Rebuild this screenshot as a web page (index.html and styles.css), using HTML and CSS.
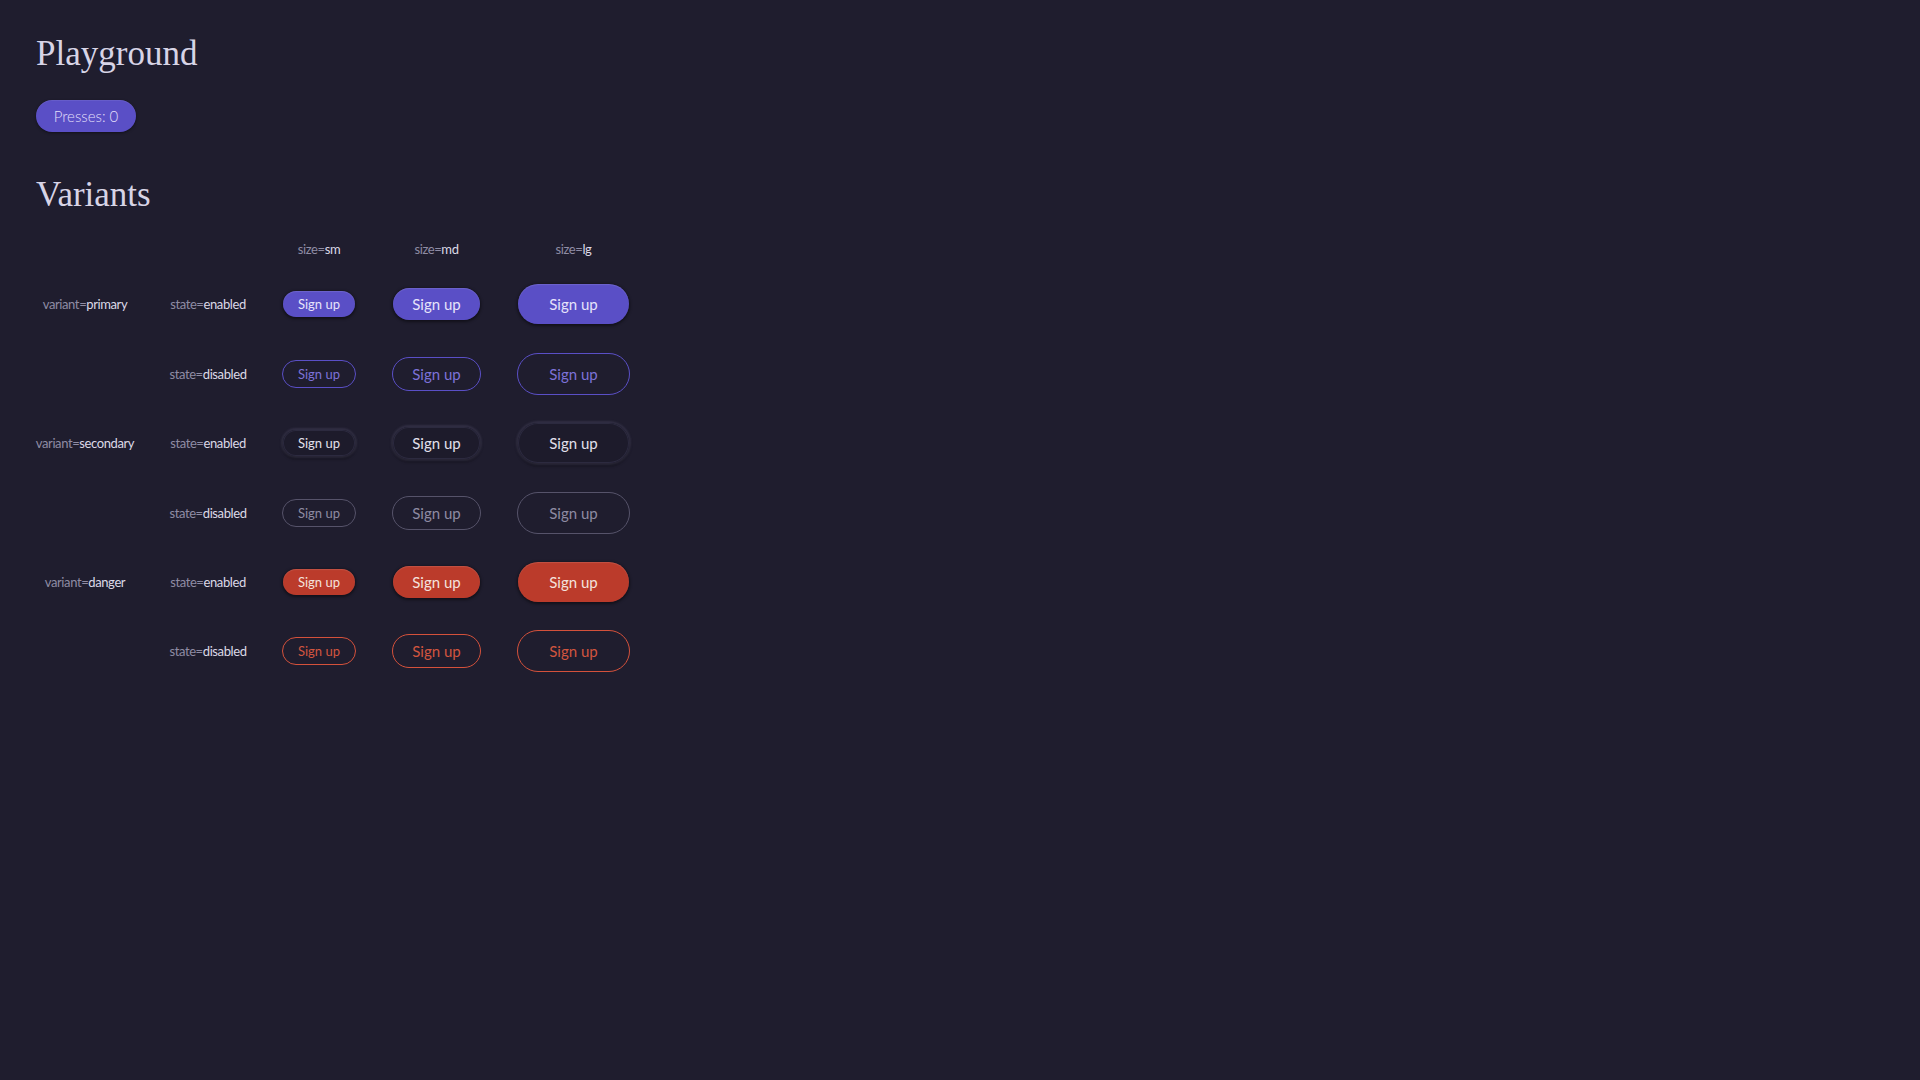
FILE: index.html
```html
<!DOCTYPE html>
<html lang="en">
<head>
<meta charset="utf-8">
<title>Playground</title>
<link rel="stylesheet" href="styles.css">
</head>
<body>
<main class="page">
  <h1 class="title">Playground</h1>
  <div class="presses-row">
    <button class="presses">Presses: 0</button>
  </div>
  <h2 class="title title-sub">Variants</h2>
  <div class="matrix">
    <div class="cell head"></div>
    <div class="cell head"></div>
    <div class="cell head label"><span class="k">size=</span><span class="v">sm</span></div>
    <div class="cell head label"><span class="k">size=</span><span class="v">md</span></div>
    <div class="cell head label"><span class="k">size=</span><span class="v">lg</span></div>

    <div class="cell label"><span class="k">variant=</span><span class="v">primary</span></div>
    <div class="cell label"><span class="k">state=</span><span class="v">enabled</span></div>
    <div class="cell"><button class="btn sm primary">Sign up</button></div>
    <div class="cell"><button class="btn md primary">Sign up</button></div>
    <div class="cell"><button class="btn lg primary">Sign up</button></div>

    <div class="cell"></div>
    <div class="cell label"><span class="k">state=</span><span class="v">disabled</span></div>
    <div class="cell"><button class="btn sm primary-off" disabled>Sign up</button></div>
    <div class="cell"><button class="btn md primary-off" disabled>Sign up</button></div>
    <div class="cell"><button class="btn lg primary-off" disabled>Sign up</button></div>

    <div class="cell label"><span class="k">variant=</span><span class="v">secondary</span></div>
    <div class="cell label"><span class="k">state=</span><span class="v">enabled</span></div>
    <div class="cell"><button class="btn sm secondary">Sign up</button></div>
    <div class="cell"><button class="btn md secondary">Sign up</button></div>
    <div class="cell"><button class="btn lg secondary">Sign up</button></div>

    <div class="cell"></div>
    <div class="cell label"><span class="k">state=</span><span class="v">disabled</span></div>
    <div class="cell"><button class="btn sm secondary-off" disabled>Sign up</button></div>
    <div class="cell"><button class="btn md secondary-off" disabled>Sign up</button></div>
    <div class="cell"><button class="btn lg secondary-off" disabled>Sign up</button></div>

    <div class="cell label"><span class="k">variant=</span><span class="v">danger</span></div>
    <div class="cell label"><span class="k">state=</span><span class="v">enabled</span></div>
    <div class="cell"><button class="btn sm danger">Sign up</button></div>
    <div class="cell"><button class="btn md danger">Sign up</button></div>
    <div class="cell"><button class="btn lg danger">Sign up</button></div>

    <div class="cell"></div>
    <div class="cell label"><span class="k">state=</span><span class="v">disabled</span></div>
    <div class="cell"><button class="btn sm danger-off" disabled>Sign up</button></div>
    <div class="cell"><button class="btn md danger-off" disabled>Sign up</button></div>
    <div class="cell"><button class="btn lg danger-off" disabled>Sign up</button></div>
  </div>
</main>
</body>
</html>
```
FILE: styles.css
```css
html, body {
  margin: 0;
  padding: 0;
  background: #1f1d2e;
  min-height: 100%;
}
body {
  font-family: Lato, "Open Sans", sans-serif;
  color: #dedbe9;
}
.page {
  padding: 34px 36px;
}
.title {
  font-family: "Liberation Serif", "DejaVu Serif", serif;
  font-weight: 400;
  font-size: 35px;
  line-height: 40px;
  color: #d7d4e6;
  margin: 0;
}
.title-sub {
  margin-top: 43px;
}
.presses-row {
  margin-top: 26px;
  display: flex;
}
.presses {
  box-sizing: border-box;
  width: 100px;
  height: 32px;
  border: none;
  border-radius: 16px;
  background: #5a4fc6;
  color: #e3dffa;
  font-family: Lato, sans-serif;
  font-size: 15px;
  font-weight: 300;
  padding: 0;
  box-shadow: inset 0 1px 0 rgba(255,255,255,0.08), 0 1px 3px rgba(0,0,0,0.45);
}
.matrix {
  margin-top: 27px;
  display: grid;
  grid-template-columns: 98px 76px 74px 89px 113px;
  grid-template-rows: 14px;
  column-gap: 36px;
  row-gap: 27.4px;
  align-items: center;
  justify-items: center;
}
.cell {
  display: flex;
  align-items: center;
  justify-content: center;
}
.label {
  font-size: 13px;
  line-height: 16px;
  white-space: nowrap;
  letter-spacing: -0.4px;
}
.head {
  height: 14px;
}
.k { color: #8f8ca4; }
.v { color: #dcd9e7; }

.btn {
  box-sizing: border-box;
  display: inline-flex;
  align-items: center;
  justify-content: center;
  padding: 0;
  font-family: Lato, sans-serif;
  border: 1px solid transparent;
  background-clip: padding-box;
  cursor: pointer;
}
.btn.sm { width: 74px; height: 28px; border-radius: 14px; font-size: 13px; }
.btn.md { width: 89px; height: 34px; border-radius: 17px; font-size: 15px; }
.btn.lg { width: 113px; height: 42px; border-radius: 21px; font-size: 15px; }

.primary {
  background-color: #5a4fc6;
  color: #e6e3fb;
  box-shadow: inset 0 1px 1px rgba(255,255,255,0.12), 0 1px 3px rgba(0,0,0,0.45);
}
.primary-off {
  background: transparent;
  border-color: #5a4fc6;
  color: #7d72d8;
}
.secondary {
  background-color: #1d1b2b;
  color: #e2e0ec;
  box-shadow: inset 0 0 0 1px #2c2a3f, 0 0 2px 1px rgba(120,116,150,0.22), 0 2px 3px rgba(0,0,0,0.4);
}
.secondary-off {
  background: transparent;
  border-color: #56536a;
  color: #8e8ba2;
}
.danger {
  background-color: #bb3b2b;
  color: #f4e2dd;
  box-shadow: inset 0 1px 1px rgba(255,255,255,0.12), 0 1px 3px rgba(0,0,0,0.45);
}
.danger-off {
  background: transparent;
  border-color: #d4513b;
  color: #d2553f;
}
```
